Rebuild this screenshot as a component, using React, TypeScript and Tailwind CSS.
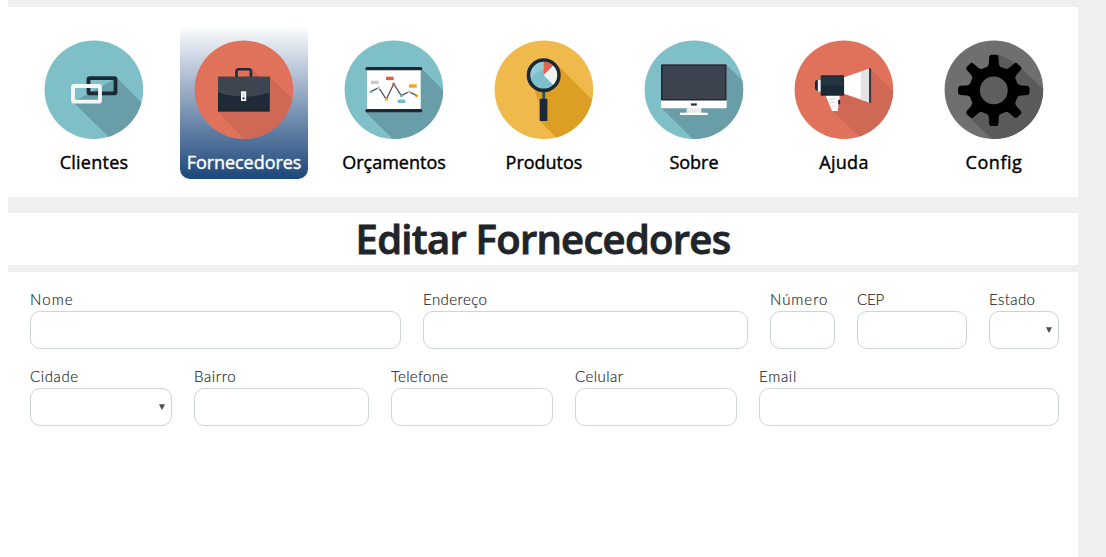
import type { ReactNode } from 'react';

function Disc({ id, color, shade, shadow, children }: { id: string; color: string; shade: string; shadow: string; children: ReactNode }) {
  return (
    <svg viewBox="0 0 100 100" className="block size-[100px]" aria-hidden="true">
      <clipPath id={id}>
        <circle cx="49.9" cy="49.7" r="49.3" />
      </clipPath>
      <circle cx="49.9" cy="49.7" r="49.3" fill={color} />
      <path d={shadow} fill={shade} clipPath={`url(#${id})`} />
      {children}
    </svg>
  );
}

const LinkIcon = () => (
  <Disc id="c1" color="#7fbfc8" shade="#699ea8" shadow="M73 38L110 75L78 110L29 62Z">
    <rect x="44.5" y="38.2" width="27" height="15.2" rx="1.2" fill="none" stroke="#1b2937" strokeWidth="3.8" />
    <rect x="29" y="46" width="27" height="15.6" rx="1.2" fill="none" stroke="#f5f7f7" strokeWidth="3.8" />
  </Disc>
);

const BriefcaseIcon = () => (
  <Disc id="c2" color="#e0725c" shade="#cf6956" shadow="M58 29L66 37H76L115 75L70 120L24 71.5Z">
    <path d="M42.5 38V31.5Q42.5 29.2 44.8 29.2H54.7Q57 29.2 57 31.5V38" fill="none" stroke="#1d2b38" strokeWidth="2.6" />
    <rect x="24" y="36.8" width="51.8" height="34.9" fill="#1e2b37" />
    <path d="M24 36.8H75.8V52.2Q50 61 24 52.2Z" fill="#3d4550" />
    <rect x="47" y="51.3" width="5.2" height="9.7" fill="#f3f3f3" />
    <path d="M49.6 53V56" stroke="#ccc" strokeWidth="1.2" />
    <circle cx="49.6" cy="58.3" r="1.1" fill="#1e2b37" />
  </Disc>
);

const dots: [number, number, string][] = [
  [27, 51.7, '#70b9c3'],
  [34.7, 47.7, '#c9cdd0'],
  [42.3, 59.3, '#f0a30a'],
  [49.7, 44, '#e0523f'],
  [57.3, 55.7, '#70b9c3'],
  [65, 51.7, '#c9cdd0'],
  [72.7, 55.7, '#f0a30a'],
];

const BoardIcon = () => (
  <Disc id="c3" color="#7fbfc8" shade="#699ea8" shadow="M78 29L120 71L70 120L21 71.5Z">
    <rect x="23" y="28.5" width="53.7" height="42" fill="#fff" />
    <path d="M23 28.7H76.7M23 70.7H76.7" stroke="#1b2937" strokeWidth="3.3" strokeLinecap="round" />
    <polyline points="27,51.7 34.7,47.7 42.3,59.3 49.7,44 57.3,55.7 65,51.7 72.7,55.7" fill="none" stroke="#4a525d" strokeWidth="1.3" />
    {dots.map(([x, y, c]) => (
      <circle key={x} cx={x} cy={y} r="1.5" fill={c} />
    ))}
    <rect x="27" y="40.7" width="7.7" height="3.4" fill="#c9c9c9" />
    <rect x="42" y="36.7" width="7.7" height="3.4" fill="#e0604b" />
    <rect x="65" y="44.3" width="7.7" height="3.4" fill="#f0a818" />
    <rect x="53.7" y="59.6" width="7.4" height="3.4" fill="#73bac4" />
  </Disc>
);

const MagnifierIcon = () => (
  <Disc id="c4" color="#f0b94c" shade="#dc9f24" shadow="M61.5 23L110 71.5L80 115L45.7 81V64L40 49Z">
    <rect x="48.3" y="50" width="2.9" height="10" fill="#3d4d5c" />
    <rect x="45.7" y="58.7" width="7.7" height="22.4" rx="0.8" fill="#1b2937" />
    <circle cx="49.7" cy="35.2" r="15.2" fill="#7dc0cb" stroke="#1b2937" strokeWidth="3.6" />
    <path d="M49.7 35.2V21.8A13.4 13.4 0 0 1 59.2 25.7Z" fill="#e0654f" />
    <path d="M49.7 35.2L59.2 25.7A13.4 13.4 0 0 1 59.2 44.7Z" fill="#f1f1f1" />
    <path d="M36.3 35.2A13.4 13.4 0 0 1 49.7 21.8V29Q40 32 37.5 39Z" fill="#fff" fillOpacity="0.2" />
  </Disc>
);

const MonitorIcon = () => (
  <Disc id="c5" color="#7fbfc8" shade="#699ea8" shadow="M82.7 25L120 62L80 130L17 67.5Z">
    <rect x="42.7" y="67" width="14.6" height="7" fill="#ebebeb" />
    <rect x="36" y="72.7" width="27.7" height="2.3" fill="#fff" />
    <rect x="17" y="24.3" width="65.7" height="44" rx="1" fill="#fff" />
    <rect x="17" y="24.3" width="65.7" height="36.3" rx="0.8" fill="#1b2937" />
    <rect x="18.6" y="25.8" width="62.5" height="33.2" fill="#3d434e" />
    <rect x="47" y="63.4" width="5.8" height="2.2" fill="#26313d" />
  </Disc>
);

const MegaphoneIcon = () => (
  <Disc id="c6" color="#e0725c" shade="#cf6956" shadow="M77 29L112 64L80 110.5L38.3 70.7L50 53Z">
    <path d="M24 40H23Q21 40 21 43V48Q21 50.8 23 50.8H24Z" fill="#1b2937" />
    <rect x="23.8" y="40" width="3.2" height="11.5" fill="#f3f3f3" />
    <path d="M31.3 55H45.9L43.7 71H38.1Z" fill="#fafafa" />
    <path d="M35 59H41M36.2 62.5H41M37.4 66H41" stroke="#d9d9d9" strokeWidth="1.2" />
    <rect x="44.2" y="60" width="1.9" height="4.3" fill="#1b2937" />
    <path d="M50 37.2L75.3 28.7V62.4L50 53.8Z" fill="#fff" />
    <path d="M66.7 31.6L75.3 28.7V62.4L66.7 59.5Z" fill="#e3e3e3" />
    <rect x="75" y="28.3" width="2.1" height="34.4" fill="#343c48" />
    <rect x="26.7" y="35.3" width="23.4" height="20.4" rx="1" fill="#1b2937" />
    <rect x="27" y="36.5" width="22.8" height="9" fill="#223541" />
  </Disc>
);

const GearIcon = () => (
  <Disc id="c7" color="#6f6f6f" shade="#5b5b5b" shadow="M54 14L72 23L120 69L70 120L22 74Z">
    <g fill="#000">
      {[0, 45, 90, 135, 180, 225, 270, 315].map((a) => (
        <path key={a} transform={`rotate(${a} 49.8 50.4)`} d="M40 29Q44.4 27 44.8 23.5L45.2 16.8Q45.4 14.7 47.4 14.7H52.2Q54.2 14.7 54.4 16.8L54.8 23.5Q55.2 27 59.6 29Z" />
      ))}
    </g>
    <circle cx="49.8" cy="50.4" r="19.2" fill="#5e5e5e" stroke="#000" strokeWidth="10.6" />
  </Disc>
);

const items = [
  { name: 'Clientes', icon: <LinkIcon />, track: 'tracking-[0.25px]' },
  { name: 'Fornecedores', icon: <BriefcaseIcon />, track: 'tracking-[-0.05px]', active: true },
  { name: 'Orçamentos', icon: <BoardIcon />, track: 'tracking-[0px]' },
  { name: 'Produtos', icon: <MagnifierIcon />, track: 'tracking-[0px]' },
  { name: 'Sobre', icon: <MonitorIcon />, track: 'tracking-[0px]' },
  { name: 'Ajuda', icon: <MegaphoneIcon />, track: 'tracking-[0.3px]' },
  { name: 'Config', icon: <GearIcon />, track: 'tracking-[0.55px]' },
];

function Field({ label, width, track, select }: { label: string; width: string; track: string; select?: boolean }) {
  const box = 'block h-[38px] w-full rounded-[10px] border border-[#ced4da] bg-white outline-none';
  return (
    <label className={`block shrink-0 ${width}`}>
      <span className={`block h-[23px] whitespace-nowrap text-[15px] leading-[23px] ${track}`}>{label}</span>
      {select ? (
        <span className={`${box} flex items-center justify-end pr-[6px]`}>
          <svg viewBox="0 0 6 6" className="mb-px size-[6px]" aria-hidden="true">
            <path d="M0 0.3H6L3.4 5.6H2.6Z" fill="#495057" />
          </svg>
        </span>
      ) : (
        <input className={box} />
      )}
    </label>
  );
}

export default function App() {
  return (
    <div className="h-[557px] w-[1106px] overflow-hidden bg-white pl-2 font-['Open_Sans',sans-serif] text-[#212529]">
      <div className="flex h-full flex-col bg-[#efefef] pr-7 pt-[7px]">
        <nav className="flex h-[190px] shrink-0 gap-[22px] bg-white pl-[22px] pt-[18px]">
          {items.map((it) => (
            <a
              key={it.name}
              className={`flex h-[154px] w-32 flex-col items-center rounded-[10px] pt-[15px] ${it.active ? 'bg-linear-to-b from-white to-[#1c477a] text-white' : 'text-black'}`}
            >
              {it.icon}
              <span className={`mt-[10px] whitespace-nowrap text-[18px] font-normal leading-6 [-webkit-text-stroke:0.4px] ${it.track}`}>{it.name}</span>
            </a>
          ))}
        </nav>
        <header className="mt-4 h-[52px] shrink-0 bg-white text-center">
          <h1 className="text-[40px] font-semibold leading-[51px] tracking-[-0.72px] [-webkit-text-stroke:0.9px]">Editar Fornecedores</h1>
        </header>
        <form className="mt-[7px] flex grow flex-col gap-4 bg-white pl-[22px] pt-4 font-['Lato',sans-serif] font-light [-webkit-text-stroke:0.15px]">
          <div className="flex gap-[22px]">
            <Field label="Nome" width="w-[371px]" track="tracking-[1.1px]" />
            <Field label="Endereço" width="w-[325px]" track="tracking-[0.45px]" />
            <Field label="Número" width="w-[65px]" track="tracking-[0.95px]" />
            <Field label="CEP" width="w-[110px]" track="tracking-[-0.2px]" />
            <Field label="Estado" width="w-[70px]" track="tracking-[0.4px]" select />
          </div>
          <div className="flex gap-[22px]">
            <Field label="Cidade" width="w-[142px]" track="tracking-[0.6px]" select />
            <Field label="Bairro" width="w-[175px]" track="tracking-[0.6px]" />
            <Field label="Telefone" width="w-[162px]" track="tracking-[0.3px]" />
            <Field label="Celular" width="w-[162px]" track="tracking-[0.45px]" />
            <Field label="Email" width="w-[300px]" track="tracking-[0.7px]" />
          </div>
        </form>
      </div>
    </div>
  );
}
